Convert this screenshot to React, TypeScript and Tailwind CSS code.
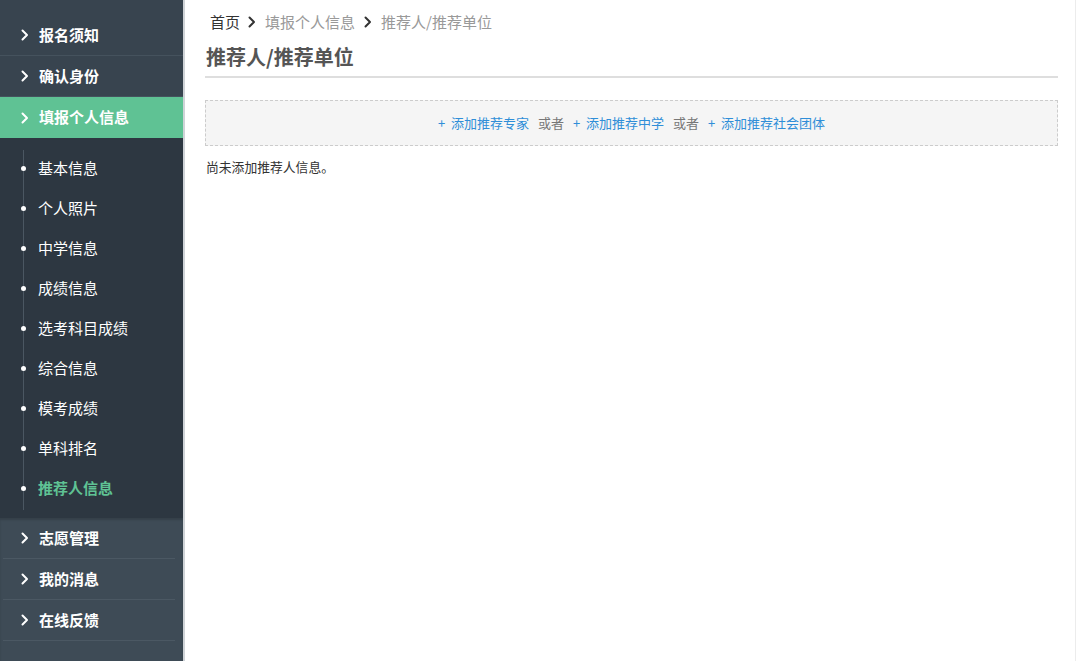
const topItems = ["报名须知", "确认身份"];
const subItems = ["基本信息", "个人照片", "中学信息", "成绩信息", "选考科目成绩", "综合信息", "模考成绩", "单科排名", "推荐人信息"];
const bottomItems = ["志愿管理", "我的消息", "在线反馈"];

function Chevron({ className }: { className?: string }) {
    return (
        <svg width="8" height="12" viewBox="0 0 8 12" className={className}>
            <path d="M1.5 1.5 L6 6 L1.5 10.5" fill="none" stroke="currentColor" strokeWidth="2" strokeLinecap="round" strokeLinejoin="round" />
        </svg>
    );
}

function MenuItem({ label, active, divider }: { label: string; active?: boolean; divider?: boolean }) {
    return (
        <div className={`flex items-center h-[41px] pl-[21px] gap-[10px] text-white font-bold text-[15px] ${active ? "bg-[#5fc294]" : ""} ${divider ? "border-b border-[#45525d]" : ""}`}>
            <Chevron className="text-white" />
            <span>{label}</span>
        </div>
    );
}

export default function App() {
    return (
        <div className="flex min-h-screen h-[661px] bg-white" style={{ fontFamily: '"Noto Sans CJK SC", "Noto Sans", sans-serif' }}>
            <aside className="w-[185px] shrink-0 flex flex-col bg-[#2d3741] border-r-2 border-[#cfd3d7]">
                <div className="bg-[#38444f] pt-[15px]">
                    {topItems.map((item) => (
                        <MenuItem key={item} label={item} divider />
                    ))}
                    <MenuItem label="填报个人信息" active />
                </div>

                <div className="relative py-[10px]">
                    <div className="absolute left-[23px] top-[12px] bottom-[8px] w-px bg-[#4b5762]" />
                    {subItems.map((item, i) => {
                        const current = i === subItems.length - 1;
                        return (
                            <div key={item} className="relative flex items-center h-[40px] pl-[38px]">
                                <span className="absolute left-[21px] w-[5px] h-[5px] rounded-full bg-white" />
                                <span className={`text-[15px] ${current ? "text-[#5fc294] font-bold" : "text-white"}`}>{item}</span>
                            </div>
                        );
                    })}
                </div>

                <div className="flex-1 bg-[#3e4b56] shadow-[inset_0_2px_2px_rgba(0,0,0,0.15)]">
                    {bottomItems.map((item) => (
                        <div key={item} className="mx-[3px] mr-[8px] border-b border-[#4b5863]">
                            <div className="flex items-center h-[40px] pl-[18px] gap-[10px] text-white font-bold text-[15px]">
                                <Chevron className="text-white" />
                                <span>{item}</span>
                            </div>
                        </div>
                    ))}
                </div>
            </aside>

            <main className="flex-1 border-r border-[#ececec] mr-[4px]">
                <div className="pl-[20px] pr-[17px]">
                    {/* breadcrumb */}
                    <div className="flex items-center gap-[8px] h-[44px] pl-[5px] text-[15px]">
                        <span className="text-[#333]">首页</span>
                        <Chevron className="text-[#333]" />
                        <span className="text-[#999] ml-[1px]">填报个人信息</span>
                        <Chevron className="text-[#333] ml-[1px]" />
                        <span className="text-[#999] ml-[1px]">推荐人/推荐单位</span>
                    </div>

                    <h1 className="text-[20px] font-bold text-[#555] pb-[6px] border-b-2 border-[#dedede] pl-[1px] leading-[26px]">
                        推荐人/推荐单位
                    </h1>

                    <div className="mt-[22px] h-[46px] flex items-center justify-center gap-[9px] bg-[#f5f5f5] border border-dashed border-[#cccccc] text-[13px]">
                        <span className="text-[#2f8ed8]">+&nbsp; 添加推荐专家</span>
                        <span className="text-[#777]">或者</span>
                        <span className="text-[#2f8ed8]">+&nbsp; 添加推荐中学</span>
                        <span className="text-[#777]">或者</span>
                        <span className="text-[#2f8ed8]">+&nbsp; 添加推荐社会团体</span>
                    </div>

                    <p className="mt-[11px] pl-[1px] text-[12.8px] text-[#333]">尚未添加推荐人信息。</p>
                </div>
            </main>
        </div>
    );
}
